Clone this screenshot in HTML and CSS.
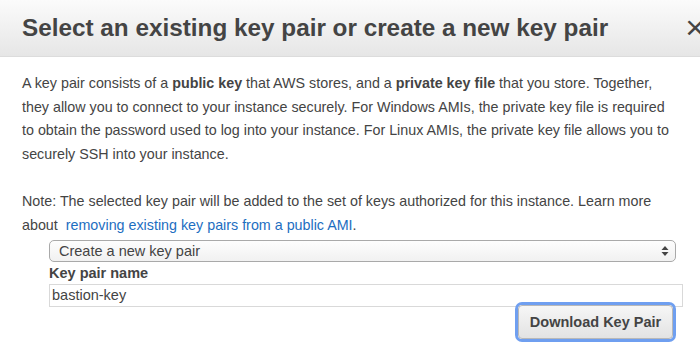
FILE: index.html
```html
<!DOCTYPE html>
<html lang="en">
<head>
    <meta charset="UTF-8">
    <title>Select an existing key pair</title>
    <link rel="stylesheet" href="styles.css">
</head>
<body>
<div class="dialog">
    <div class="header">
        <h1>Select an existing key pair or create a new key pair</h1>
        <span class="close">&times;</span>
    </div>
    <div class="content">
        <p>A key pair consists of a <strong>public key</strong> that AWS stores, and a <strong>private key file</strong> that you store. Together,<br>
            they allow you to connect to your instance securely. For Windows AMIs, the private key file is required<br>
            to obtain the password used to log into your instance. For Linux AMIs, the private key file allows you to<br>
            securely SSH into your instance.</p>
        <p class="note">Note: The selected key pair will be added to the set of keys authorized for this instance. Learn more<br>
            about <a href="#">removing existing key pairs from a public AMI</a>.</p>
        <div class="form">
            <div class="select">
                <span>Create a new key pair</span>
                <svg class="arrows" width="8" height="12" viewBox="0 0 8 12">
                    <path d="M4 1 L7.5 5 L0.5 5 Z" fill="#444"/>
                    <path d="M4 11 L7.5 7 L0.5 7 Z" fill="#444"/>
                </svg>
            </div>
            <label class="label">Key pair name</label>
            <div class="input">bastion-key</div>
            <div class="actions">
                <button class="btn">Download Key Pair</button>
            </div>
        </div>
    </div>
</div>
</body>
</html>
```

FILE: styles.css
```css
body{
    margin: 0;
    background-color: #ffffff;
    font-family: "Liberation Sans", Arial, sans-serif;
    color: #444444;
    overflow: hidden;
}
.dialog{
    width: 700px;
    height: 355px;
    overflow: hidden;
}
.header{
    display: flex;
    align-items: center;
    justify-content: space-between;
    height: 57px;
    padding: 0 0 0 22px;
    background: linear-gradient(#fbfbfb, #e6e6e6);
    border-bottom: 1px solid #dcdcdc;
    box-sizing: border-box;
}
.header h1{
    margin: 0;
    font-size: 24.3px;
    font-weight: bold;
    color: #444444;
}
.close{
    font-size: 34px;
    color: #444444;
    line-height: 1;
    margin-right: -5px;
    margin-top: -2px;
}
.content{
    padding: 15px 10px 0 22px;
    font-size: 14.3px;
    line-height: 23.7px;
    white-space: nowrap;
}
.content p{
    margin: 0;
}
.content .note{
    margin-top: 23px;
}
a{
    color: #1d6ec1;
    text-decoration: none;
    margin-left: 4px;
}
.form{
    margin-top: 3px;
    padding-left: 27px;
    width: 634px;
    font-size: 14.5px;
}
.select{
    display: flex;
    align-items: center;
    justify-content: space-between;
    width: 627px;
    height: 22px;
    box-sizing: border-box;
    border: 1px solid #a9a9a9;
    border-radius: 5px;
    background: linear-gradient(#fdfdfd, #f1f1f1);
    padding: 0 6px 0 9px;
    line-height: 20px;
}
.arrows{
    display: block;
}
.label{
    display: block;
    font-weight: bold;
    line-height: 21px;
    margin-top: 1px;
}
.input{
    height: 23px;
    box-sizing: border-box;
    border: 1px solid #d9d9d9;
    padding-left: 2px;
    line-height: 21px;
}
.actions{
    display: flex;
    justify-content: flex-end;
    padding-right: 10px;
    margin-top: -2px;
}
.btn{
    font-family: "Liberation Sans", Arial, sans-serif;
    font-size: 14.5px;
    font-weight: bold;
    color: #444444;
    width: 155px;
    height: 34px;
    border: 1px solid #b8b8b8;
    border-radius: 4px;
    background: linear-gradient(#f6f6f6, #e3e3e3);
    box-shadow: 0 0 0 3px #6f9ff0;
}
```
